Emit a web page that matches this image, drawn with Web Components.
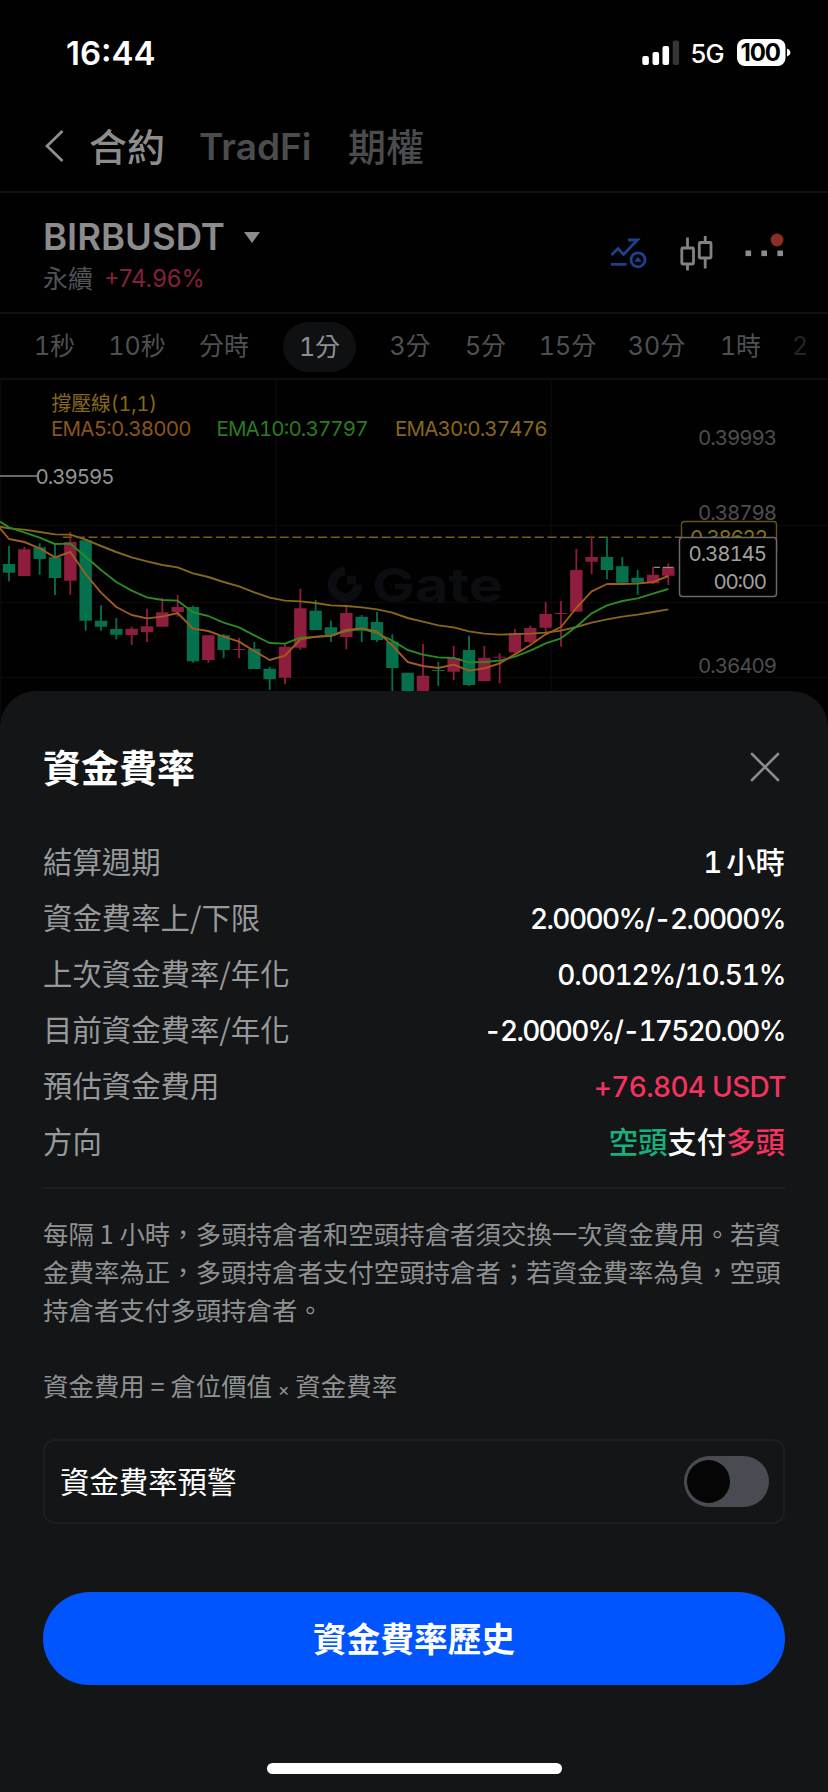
<!DOCTYPE html>
<html lang="zh-Hant">
<head>
<meta charset="utf-8">
<title>資金費率</title>
<style>
html, body { margin: 0; background: #000; }
body { font-family: Inter, "Noto Sans CJK TC", sans-serif; color: #fff; }
</style>
</head>
<body>
<phone-screen>
  <status-bar></status-bar>
  <page-tabs></page-tabs>
  <pair-header></pair-header>
  <time-frames></time-frames>
  <candle-chart></candle-chart>
  <bottom-sheet slot="sheet" heading="資金費率">
    <info-row label="結算週期" cjk>1 小時</info-row>
    <info-row label="資金費率上/下限" w="253">2.0000%/-2.0000%</info-row>
    <info-row label="上次資金費率/年化" w="226">0.0012%/10.51%</info-row>
    <info-row label="目前資金費率/年化" w="299">-2.0000%/-17520.00%</info-row>
    <info-row label="預估資金費用" tone="down" w="190">+76.804 USDT</info-row>
    <info-row label="方向" cjk><span style="color:#16b07c">空頭</span>支付<span style="color:#f0335f">多頭</span></info-row>
    <rate-notes slot="more"></rate-notes>
    <alert-toggle slot="more">資金費率預警</alert-toggle>
    <primary-button slot="more">資金費率歷史</primary-button>
  </bottom-sheet>
</phone-screen>
<script>
const define = (name, html, after) => customElements.define(name, class extends HTMLElement {
  connectedCallback() {
    if (this.shadowRoot) return;
    const root = this.attachShadow({ mode: 'open' });
    root.innerHTML = typeof html === 'function' ? html(this) : html;
    if (after) after(root, this);
  }
});

define('phone-screen', `
<style>
:host { display: flex; flex-direction: column; position: relative; width: 828px; height: 1792px; background: #010101; overflow: hidden; }
.sheet { position: absolute; left: 0; right: 0; bottom: 0; height: 1101px; }
</style>
<slot></slot><div class="sheet"><slot name="sheet"></slot></div>`);

define('status-bar', `
<style>
:host { display: flex; height: 105px; box-sizing: border-box; padding: 0 37.500px 0 66px; justify-content: space-between; }
.time { font-size: 33px; font-weight: 600; line-height: 40px; margin-top: 33px; }
svg { display: block; margin-top: 30px; }
</style>
<div class="time">16:44</div>
<svg width="152" height="45" viewBox="638 30 152 45" font-family="Inter, sans-serif">
  <g fill="#fff"><rect x="641.3" y="56" width="6.6" height="9" rx="2"/><rect x="651.5" y="52" width="6.6" height="13" rx="2"/><rect x="661.5" y="46" width="6.6" height="19" rx="2"/></g>
  <rect x="671.7" y="40.500" width="6.4" height="24.500" rx="2" fill="#353535"/>
  <text x="689.5" y="63" font-size="25.500" font-weight="500" fill="#fff" textLength="34">5G</text>
  <rect x="736" y="39" width="48.500" height="27" rx="8" fill="#fff"/>
  <path d="M786 48.500q3.400 1.500 3.400 4t-3.400 4z" fill="#fff"/>
  <text x="739.500" y="61" font-size="24" font-weight="700" fill="#000" textLength="40.500">100</text>
</svg>`);

define('page-tabs', `
<style>
:host { display: flex; align-items: center; height: 88px; box-sizing: border-box; padding: 0 45px 4px; border-bottom: 2px solid #101112; font-weight: 700; font-size: 38px; color: #4b4c4e; line-height: 1; }
svg { margin-right: 25px; }
.on { color: #8d8d8e; width: 110px; }
.mid { width: 149px; font-size: 37px; font-weight: 600; }
.cjk { font-family: "Noto Sans CJK TC", sans-serif; font-weight: 500; margin-top: -3px; }
</style>
<svg width="19" height="34" viewBox="0 0 19 34" fill="none" stroke="#8d8d8e" stroke-width="2.800"><path d="M17.500 2 2 17 17.500 32"/></svg>
<span class="on cjk">合約</span><span class="mid">TradFi</span><span class="cjk">期權</span>`);

define('pair-header', `
<style>
:host { display: flex; justify-content: space-between; height: 121px; box-sizing: border-box; padding: 23px 43px 0 43px; border-bottom: 2px solid #101112; }
.name { display: flex; align-items: center; height: 42px; font-size: 36.500px; font-weight: 600; color: #8c8c8c; gap: 19px; }
.sub { display: flex; gap: 11px; font-size: 25px; line-height: 36px; height: 36px; margin-top: 3px; color: #505357; }
.pct { color: #85203c; font-size: 23.600px; }
svg.i { margin-top: 9px; }
</style>
<div>
  <div class="name"><span>BIRBUSDT</span><svg width="16" height="11" viewBox="0 0 16 11"><path d="M0 0H16L8 11Z" fill="#8c8c8c"/></svg></div>
  <div class="sub"><span>永續</span><span class="pct">+74.96%</span></div>
</div>
<svg class="i" width="185" height="60" viewBox="600 225 185 60" fill="none">
  <g stroke="#1d418e" stroke-width="2.800"><path d="M611.500 255 618 248.500 623.500 254.500 637.500 240H628M611 264.300H626.500"/><circle cx="638" cy="259.800" r="7"/><path d="M635.500 261.200 638 257.800 640.500 261.200Z" stroke-width="1.200" fill="#1d418e"/></g>
  <g stroke="#828282" stroke-width="2.800"><rect x="681.800" y="248" width="11.700" height="16" rx="1"/><path d="M687.500 237.500V248M687.500 264V270.500"/><rect x="699.300" y="242.500" width="11.700" height="15.500" rx="1"/><path d="M705.200 236V242.500M705.200 258V268.500"/></g>
  <circle cx="777" cy="240" r="6.400" fill="#8b2f25"/>
  <g fill="#8c8c8c"><rect x="745.500" y="250.500" width="5.600" height="5.600"/><rect x="761.400" y="250.500" width="5.600" height="5.600"/><rect x="777.400" y="250.500" width="5.600" height="5.600"/></g>
</svg>`);

define('time-frames', `
<style>
:host { display: flex; align-items: center; height: 66px; box-sizing: border-box; border-bottom: 2px solid #0d0e0e; padding: 1px 0 0 17px; font: 25px/51px Inter, "Noto Sans CJK TC", sans-serif; font-feature-settings: "tnum"; color: #4e5053; }
span { text-align: center; flex: none; }
.on { background: #0e1012; color: #8e8f90; border-radius: 25px; height: 50px; }
</style>
<span style="width:75px">1秒</span><span style="width:90px">10秒</span><span style="width:84px">分時</span><span class="on" style="width:73px;margin:0 17px">1分</span><span style="width:74px">3分</span><span style="width:77px">5分</span><span style="width:87px">15分</span><span style="width:91px">30分</span><span style="width:77px">1時</span><span style="width:42px;color:#222426">2</span>`);

define('candle-chart', () => {
  // One entry per candle: direction, then body top and bottom, wick top and bottom.
  const C = `G582,608,528,634 R538,618,530,618 G532,567,520,614 G562,624,520,675 R516,632,486,674 G511,752,508,782 G752,770,706,782 G777,794,744,808 R776,795,770,825 R769,786,716,816 R727,770,683,770 R711,726,675,740 G711,874,707,878 R796,870,796,878 G796,840,792,865 R837,840,803,865 G836,897,815,897 G896,928,890,960 R830,923,822,943 R715,833,656,840 G722,780,690,780 G772,796,752,816 R729,801,710,838 G740,782,735,816 G756,810,726,816 G815,894,793,970 G908,970,908,970 R917,970,822,970 G900,903,876,948 R864,905,828,930 G840,945,797,948 R863,933,828,933 R860,863,850,940 R793,847,777,852 R774,816,767,820 R732,773,695,785 R729,732,693,830 R600,725,537,725 R561,575,500,612 G561,600,500,628 G589,638,561,640 G623,638,600,674 R614,640,590,642 R591,617,580,645`.split(' ');
  const X = i => 9 + i * 15.333, Y = v => 370 + v / 3;
  const bars = C.map((s, i) => {
    const c = s[0] === 'G' ? '#05704d' : '#8f1d3d', [a, b, t, u] = s.slice(1).split(',').map(Number);
    return `<path fill="${c}" d="M${X(i) - 6.2} ${Y(a)}h12.400V${Y(b)}h-12.400zM${X(i) - .9} ${Y(t)}h1.800V${Y(u)}h-1.800z"/>`;
  }).join('');
  const line = (first, vals, c) => `<polyline fill="none" stroke="${c}" stroke-width="1.900" stroke-linejoin="round" points="0,${Y(first)} ${vals.map((v, i) => X(i) + ',' + Y(v)).join(' ')}"/>`;
  return `
<style>
:host { display: block; height: 340px; }
svg { display: block; }
</style>
<svg width="828" height="340" viewBox="0 380 828 340" font-family="Inter, 'Noto Sans CJK TC', sans-serif" font-size="20.500" style="font-feature-settings:'tnum'">
  <path stroke="#0a0a0b" stroke-width="1.500" d="M1 380V720M276 380V720M551 380V720M0 525.500H828M0 602.500H828M0 677.500H828"/>
  <g fill="#0c0d10"><path d="M345 567a17.500 17.500 0 1 0 17.500 17.500h-9a8.500 8.500 0 1 1-8.500-8.500z"/><path d="M347 575.500h9v9h-9z"/>
  <text x="372" y="602" font-size="47" font-weight="700" textLength="131" lengthAdjust="spacingAndGlyphs">Gate</text></g>
  <path stroke="#756218" stroke-width="1.500" stroke-dasharray="9 3.750" d="M63 537.300H682"/>
  ${bars}
  ${line(470, [475,479,486,493,494,509,528,546,562,574,585,592,610,621,636,649,667,683,692,694,699,706,708,712,718,728,744,755,766,772,784,791,794,792,791,788,782,771,758,748,740,734,726,718], '#86681b')}
  ${line(455, [472,487,503,522,521,560,600,636,662,682,690,692,727,738,758,772,796,819,821,803,801,796,784,776,790,812,840,854,862,864,877,876,872,860,842,820,805,770,730,706,693,685,671,657], '#2c8a22')}
  ${line(475, [507,516,535,562,546,612,668,711,735,745,740,729,776,783,800,815,843,870,857,808,800,798,780,775,784,826,876,888,894,884,902,895,880,853,825,793,771,714,664,642,642,641,636,618], '#a15b20')}
  <path stroke="#8a8a8a" stroke-width="1.300" d="M654 567.300h6M663 567.300h10"/>
  <path stroke="#8a8a8a" stroke-width="1.500" d="M0 476H37"/>
  <text x="51.500" y="410.500" fill="#86681b" textLength="105.500" lengthAdjust="spacingAndGlyphs">撐壓線(1,1)</text>
  <text x="51" y="435.500" fill="#8a541d" textLength="140.500">EMA5:0.38000</text>
  <text x="216.500" y="435.500" fill="#2c7a22" textLength="152">EMA10:0.37797</text>
  <text x="395" y="435.500" fill="#86681b" textLength="152.500">EMA30:0.37476</text>
  <text x="35.500" y="483.500" fill="#939393" textLength="79">0.39595</text>
  <g fill="#4c4d4f"><text x="698" y="444.500" textLength="79">0.39993</text><text x="698" y="520" textLength="79">0.38798</text><text x="698" y="672.500" textLength="79">0.36409</text></g>
  <rect x="681.500" y="521.500" width="95" height="32" rx="3" fill="#010101" stroke="#66551a" stroke-width="1.400"/>
  <text x="690" y="545" fill="#86701b" textLength="78">0.38622</text>
  <rect x="679.500" y="537.500" width="97" height="59" rx="3" fill="#010101" stroke="#6a6a6a" stroke-width="1.500"/>
  <text x="688.500" y="561" fill="#a0a0a0" textLength="78.500">0.38145</text>
  <text x="713.500" y="589" fill="#a0a0a0" textLength="53.500">00:00</text>
</svg>`;
});

define('bottom-sheet', el => `
<style>
:host { display: flex; flex-direction: column; height: 1101px; box-sizing: border-box; background: #131516; border-radius: 36px 36px 0 0; padding: 44px 43px 0; }
header { display: flex; justify-content: space-between; align-items: center; height: 64px; }
h1 { margin: -3px 0 0; font: 700 38px/1 "Noto Sans CJK TC", sans-serif; }
header svg { margin-right: 5px; }
.rows { margin-top: 35px; padding-bottom: 17px; border-bottom: 2px solid #1c1e20; }
.home { width: 295px; height: 11px; border-radius: 6px; background: #fff; margin: 78px auto 0; }
</style>
<header><h1>${el.getAttribute('heading')}</h1><svg width="30" height="30" viewBox="0 0 30 30" stroke="#8b8c8d" stroke-width="2.600" stroke-linecap="round"><path d="M2 2 28 28M28 2 2 28"/></svg></header>
<div class="rows"><slot></slot></div><slot name="more"></slot><div class="home"></div>`);

define('info-row', el => `
<style>
:host { display: flex; justify-content: space-between; align-items: center; height: 56px; font-size: 29.400px; }
.l { color: #97999b; font-family: "Noto Sans CJK TC", sans-serif; padding-bottom: 4px; }
.v { font-weight: 500; font-family: Inter, "Noto Sans CJK TC", sans-serif; font-feature-settings: "tnum"; white-space: nowrap; color: ${el.getAttribute('tone') ? '#f0335f' : '#fff'}; }
.n { font-size: 28px; padding-top: 1px; }
:host([cjk]) .v { padding-bottom: 4px; word-spacing: -4px; }
</style>
<span class="l">${el.getAttribute('label')}</span><span class="v ${el.hasAttribute('w') ? 'n' : ''}"><slot></slot></span>`,
(root, el) => {
  // Spread the figures evenly over the given column width.
  const w = +el.getAttribute('w'), v = root.querySelector('.v');
  if (!w) return;
  const sp = (w + 2 - v.getBoundingClientRect().width) / el.textContent.length;
  v.style.letterSpacing = sp + 'px';
  v.style.marginRight = (-1.5 - sp) + 'px';
});

define('rate-notes', `
<style>
:host { display: block; margin-top: 25px; height: 225px; font: 25.450px/38px "Noto Sans CJK TC", sans-serif; color: #8f9193; white-space: nowrap; }
p { margin: 0 0 38px; }
.x { font: 18px/1 Inter, sans-serif; }
</style>
<p>每隔 1 小時，多頭持倉者和空頭持倉者須交換一次資金費用。若資<br>金費率為正，多頭持倉者支付空頭持倉者；若資金費率為負，空頭<br>持倉者支付多頭持倉者。</p>
<p>資金費用 = 倉位價值 <span class="x">×</span> 資金費率</p>`);

define('alert-toggle', `
<style>
:host { display: flex; flex: none; justify-content: space-between; align-items: center; height: 85px; box-sizing: border-box; border: 2px solid #1c1e20; border-radius: 12px; padding: 0 14px 0 15px; font: 29.400px/1 "Noto Sans CJK TC", sans-serif; }
.t { padding-bottom: 2px; }
.sw { width: 85px; height: 51px; border-radius: 26px; background: #484b52; box-sizing: border-box; padding: 4px 3px; }
.sw i { display: block; width: 43px; height: 43px; border-radius: 50%; background: #050506; }
</style>
<span class="t"><slot></slot></span><div class="sw"><i></i></div>`);

define('primary-button', `
<style>
:host { display: flex; flex: none; align-items: center; justify-content: center; height: 93px; box-sizing: border-box; padding-bottom: 2px; margin-top: 68px; border-radius: 47px; background: #0055ff; font: 700 33.700px/1 "Noto Sans CJK TC", sans-serif; }
</style>
<slot></slot>`);
</script>
</body>
</html>
